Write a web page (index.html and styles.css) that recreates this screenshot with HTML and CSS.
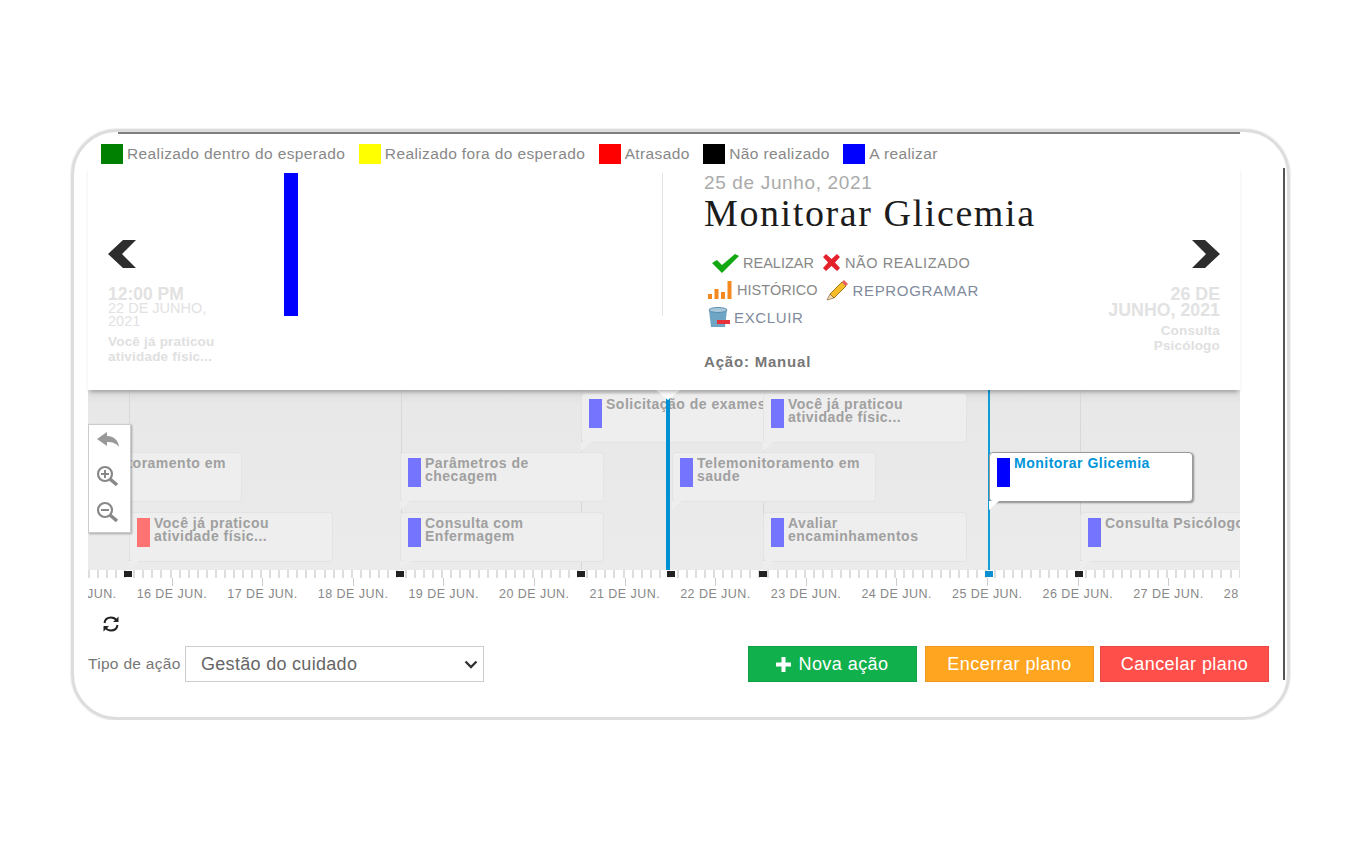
FILE: index.html
```html
<!DOCTYPE html>
<html lang="en">
<head>
    <meta charset="UTF-8">
    <title>Plano de cuidado</title>
    <link rel="stylesheet" href="styles.css">
</head>
<body>
<div class="card">
    <div class="legend">
        <div class="legend-item"><span class="swatch green"></span>Realizado dentro do esperado</div>
        <div class="legend-item"><span class="swatch yellow"></span>Realizado fora do esperado</div>
        <div class="legend-item"><span class="swatch red"></span>Atrasado</div>
        <div class="legend-item"><span class="swatch black"></span>Não realizado</div>
        <div class="legend-item"><span class="swatch blue"></span>A realizar</div>
    </div>

    <div class="slider">
        <div class="slide-prev">
            <div class="nav-col">
                <svg class="chevron" width="28" height="30" viewBox="0 0 28 30"><path d="M0 15 L15 1 H28 L14 15 L28 29 H15 Z" fill="#2d2d2d"/></svg>
                <div class="nav-time">12:00 PM</div>
                <div class="nav-date">22 DE JUNHO, 2021</div>
                <div class="nav-name">Você já praticou atividade físic...</div>
            </div>
            <div class="slide-bar"></div>
        </div>
        <div class="slide-main">
            <div class="slide-date">25 de Junho, 2021</div>
            <h1 class="slide-title">Monitorar Glicemia</h1>
            <div class="actions">
                <div class="action-row first">
                    <svg width="27" height="20" viewBox="0 0 27 20"><path d="M0 10 L5 7 L10 12 L23 1 L27 3 L10 20 Z" fill="#12a812"/></svg>
                    <span class="action-link">REALIZAR</span>
                    <svg width="19" height="17" viewBox="0 0 19 17"><path d="M1 3 L4 0 L9.5 5 L15 0 L18 3 L13 8.500 L18 14 L15 17 L9.500 12 L4 17 L1 14 L6 8.500 Z" fill="#e3222c"/></svg>
                    <span class="action-link wide">NÃO REALIZADO</span>
                </div>
                <div class="action-row">
                    <svg width="24" height="19" viewBox="0 0 24 19"><g fill="#f5891f"><rect x="0" y="13" width="4" height="5"/><rect x="6.500" y="8" width="4" height="10"/><rect x="13" y="11" width="4" height="7"/><rect x="19.500" y="0" width="4" height="18"/></g></svg>
                    <span class="action-link">HISTÓRICO</span>
                    <svg class="pencil" width="24" height="21" viewBox="0 0 24 21"><path d="M6 14 L18 2 L22 6 L10 18 Z" fill="#f6bd2b" stroke="#a8741a"/><path d="M18 2 L20 0 L24 4 L22 6 Z" fill="#e8606a"/><path d="M6 14 L10 18 L3 20 Z" fill="#f4dcb0" stroke="#74502a" stroke-width=".6"/></svg>
                    <span class="action-link blueish">REPROGRAMAR</span>
                </div>
                <div class="action-row last">
                    <svg width="23" height="21" viewBox="0 0 23 21"><path d="M1 3 H19 L17 20 H3 Z" fill="#6fa5c4"/><ellipse cx="10" cy="3" rx="9" ry="2.500" fill="#a8c8dc" stroke="#5b8fae"/><rect x="9" y="13" width="13" height="4" fill="#e8323a"/></svg>
                    <span class="action-link blueish">EXCLUIR</span>
                </div>
            </div>
            <div class="slide-kind">Ação: Manual</div>
        </div>
        <div class="slide-next">
            <svg class="chevron" width="28" height="30" viewBox="0 0 28 30"><path d="M28 15 L13 1 H0 L14 15 L0 29 H13 Z" fill="#2d2d2d"/></svg>
            <div class="nav-time-date">26 DE JUNHO, 2021</div>
            <div class="nav-name">Consulta Psicólogo</div>
        </div>
    </div>

    <div class="timeline">
        <span class="era-line" style="left:41px"></span>
        <span class="era-line" style="left:313px"></span>
        <span class="era-line" style="left:493px"></span>
        <span class="era-line" style="left:675px"></span>
        <span class="era-line" style="left:992px"></span>

        <div class="event row-2" style="left:-50px"><span class="event-bar"></span><span class="event-text">Telemonitoramento em saude</span></div>
        <div class="event row-3" style="left:41px"><span class="event-bar late"></span><span class="event-text">Você já praticou atividade físic...</span></div>
        <div class="event row-2" style="left:312px"><span class="event-bar"></span><span class="event-text">Parâmetros de checagem</span></div>
        <div class="event row-3" style="left:312px"><span class="event-bar"></span><span class="event-text">Consulta com Enfermagem</span></div>
        <div class="event row-1 nowrap" style="left:493px"><span class="event-bar"></span><span class="event-text">Solicitação de exames</span></div>
        <div class="event row-2" style="left:584px"><span class="event-bar"></span><span class="event-text">Telemonitoramento em saude</span></div>
        <div class="event row-1" style="left:675px"><span class="event-bar"></span><span class="event-text">Você já praticou atividade físic...</span></div>
        <div class="event row-3" style="left:675px"><span class="event-bar"></span><span class="event-text">Avaliar encaminhamentos</span></div>
        <div class="event row-3 nowrap" style="left:992px"><span class="event-bar"></span><span class="event-text">Consulta Psicólogo</span></div>

        <span class="current-line" style="left:900px"></span>
        <div class="event row-2 selected" style="left:901px"><span class="event-bar"></span><span class="event-text">Monitorar Glicemia</span></div>

        <span class="today-line"></span>
        <span class="pointer"></span>

        <div class="zoom-tools">
            <svg width="24" height="20" viewBox="0 0 24 20"><path d="M1 8 L11 1 V5 C18 5 22 9 23 16 C20 12 16 11 11 11 V15 Z" fill="#999"/></svg>
            <svg width="24" height="22" viewBox="0 0 24 22"><circle cx="9" cy="9" r="7" fill="none" stroke="#888" stroke-width="2.200"/><path d="M14 14 L21 20" stroke="#888" stroke-width="3.500"/><path d="M5 9 H13 M9 5 V13" stroke="#888" stroke-width="2"/></svg>
            <svg width="24" height="22" viewBox="0 0 24 22"><circle cx="9" cy="9" r="7" fill="none" stroke="#888" stroke-width="2.200"/><path d="M14 14 L21 20" stroke="#888" stroke-width="3.500"/><path d="M5 9 H13" stroke="#888" stroke-width="2"/></svg>
        </div>
    </div>

    <div class="ruler">
        <span class="mark" style="left:36px"></span>
        <span class="mark" style="left:308px"></span>
        <span class="mark" style="left:489px"></span>
        <span class="mark" style="left:579px"></span>
        <span class="mark" style="left:671px"></span>
        <span class="mark current" style="left:897px"></span>
        <span class="mark" style="left:987px"></span>
    </div>
    <div class="scale">
        <span>15 DE JUN.</span>
        <span>16 DE JUN.</span>
        <span>17 DE JUN.</span>
        <span>18 DE JUN.</span>
        <span>19 DE JUN.</span>
        <span>20 DE JUN.</span>
        <span>21 DE JUN.</span>
        <span>22 DE JUN.</span>
        <span>23 DE JUN.</span>
        <span>24 DE JUN.</span>
        <span>25 DE JUN.</span>
        <span>26 DE JUN.</span>
        <span>27 DE JUN.</span>
        <span>28 DE JUN.</span>
    </div>

    <div class="refresh">
        <svg width="18" height="18" viewBox="0 0 18 18" fill="none" stroke="#222" stroke-width="2"><path d="M2.500 8 C3 4.500 5.500 2.500 9 2.500 C11.500 2.500 13.500 3.700 14.700 5.500"/><path d="M15.500 10 C15 13.500 12.500 15.500 9 15.500 C6.500 15.500 4.500 14.300 3.300 12.500"/><path d="M16.500 1.500 V7 H11 Z M1.500 16.500 V11 H7 Z" fill="#222" stroke="none"/></svg>
    </div>

    <div class="form-row">
        <label class="form-label" for="tipo">Tipo de ação</label>
        <div class="select-wrap">
            <select class="form-select" id="tipo">
                <option>Gestão do cuidado</option>
            </select>
            <svg class="select-arrow" width="14" height="9" viewBox="0 0 14 9"><path d="M1.500 1.500 L7 7 L12.500 1.500" fill="none" stroke="#333" stroke-width="2.400"/></svg>
        </div>
        <div class="buttons">
            <button class="btn btn-green"><svg width="15" height="15" viewBox="0 0 15 15"><path d="M5.500 0 H9.500 V5.500 H15 V9.500 H9.500 V15 H5.500 V9.500 H0 V5.500 H5.500 Z" fill="#fff"/></svg>Nova ação</button>
            <button class="btn btn-orange">Encerrar plano</button>
            <button class="btn btn-red">Cancelar plano</button>
        </div>
    </div>
</div>
</body>
</html>
```

FILE: styles.css
```css
body {
    margin: 0;
    padding: 0;
    background-color: #fff;
    font-family: "Liberation Sans", Arial, sans-serif;
}
.card {
    position: relative;
    box-sizing: border-box;
    width: 1219px;
    height: 591px;
    margin: 129px 0 0 71px;
    padding: 12px 0 0 14px;
    border: 3px solid #ddd;
    border-radius: 46px;
    box-shadow: 0 0 2px #ccc;
}
.card::before {
    content: "";
    position: absolute;
    top: 0;
    left: 44px;
    width: 1122px;
    height: 2px;
    background-color: #808080;
}
.card::after {
    content: "";
    position: absolute;
    top: 36px;
    right: 2px;
    width: 2px;
    height: 512px;
    background-color: #555;
}

/* legenda */
.legend {
    display: flex;
    height: 20px;
    padding-left: 13px;
    gap: 13.500px;
}
.legend-item {
    display: flex;
    align-items: center;
    font-size: 15.500px;
    letter-spacing: .38px;
    color: #888;
}
.swatch {
    width: 22px;
    height: 20px;
    margin-right: 4px;
}
.swatch.green { background-color: #008000; }
.swatch.yellow { background-color: #ffff00; }
.swatch.red { background-color: #ff0000; }
.swatch.black { background-color: #000; }
.swatch.blue { background-color: #0000ff; }

/* slide atual */
.slider {
    position: relative;
    z-index: 2;
    display: flex;
    width: 1152px;
    height: 226px;
    background-color: #fff;
    box-shadow: 0 4px 4px -2px rgba(0, 0, 0, 0.28);
}
.slide-prev {
    flex: none;
    display: flex;
    box-sizing: border-box;
    width: 575px;
    height: 143px;
    margin-top: 9px;
    padding-left: 20px;
    border-right: 1px solid #e4e4e4;
}
.nav-col {
    width: 112px;
    padding-top: 66px;
}
.chevron {
    display: block;
}
.nav-time {
    margin-top: 18px;
    font-size: 17.500px;
    line-height: 15px;
    font-weight: bold;
    color: #e2e2e2;
}
.nav-date {
    font-size: 14.500px;
    line-height: 13px;
    color: #e2e2e2;
}
.nav-name {
    margin-top: 6px;
    font-size: 13.500px;
    line-height: 15px;
    font-weight: bold;
    letter-spacing: .2px;
    color: #e0e0e0;
}
.slide-bar {
    width: 14px;
    height: 143px;
    margin-left: 64px;
    background-color: #0000ff;
}
.slide-main {
    flex: none;
    box-sizing: border-box;
    width: 442px;
    padding: 9px 0 0 41px;
}
.slide-date {
    font-size: 19px;
    line-height: 20px;
    letter-spacing: .65px;
    color: #aaa;
}
.slide-title {
    margin: 1px 0 0;
    font-family: "Liberation Serif", Georgia, serif;
    font-size: 38px;
    line-height: 38px;
    font-weight: normal;
    letter-spacing: 1.600px;
    color: #1c1c1c;
}
.actions {
    margin-top: 17px;
}
.action-row {
    display: flex;
    align-items: center;
    height: 27.500px;
    padding-left: 4px;
    gap: 5px;
    font-size: 14.500px;
    color: #888;
}
.action-row.first {
    padding-left: 8px;
    gap: 4px;
}
.action-row.last {
    gap: 3px;
}
.action-row svg + span + svg {
    margin-left: 4px;
}
.action-row svg.pencil {
    margin-left: 1px;
}
.action-link.wide {
    letter-spacing: .6px;
}
.action-link.blueish {
    font-size: 15px;
    letter-spacing: .65px;
    color: #7f8a9c;
}
.slide-kind {
    margin-top: 21px;
    font-size: 15px;
    font-weight: bold;
    letter-spacing: .8px;
    color: #777;
}
.slide-next {
    flex: 1;
    display: flex;
    flex-direction: column;
    align-items: flex-end;
    padding: 75px 20px 0 0;
    text-align: right;
}
.nav-time-date {
    width: 115px;
    margin-top: 17px;
    font-size: 17.800px;
    line-height: 16px;
    font-weight: bold;
    color: #e2e2e2;
}
.slide-next .nav-name {
    width: 75px;
    margin-top: 5px;
}

/* linha do tempo */
.timeline {
    position: relative;
    width: 1152px;
    height: 180px;
    overflow: hidden;
    background: linear-gradient(#dcdcdc 0, #e8e8e8 14px, #ebebeb 100%);
}
.era-line {
    position: absolute;
    top: 0;
    bottom: 0;
    width: 1px;
    background-color: #d8d8d8;
}
.event {
    position: absolute;
    box-sizing: border-box;
    display: flex;
    width: 204px;
    height: 50px;
    padding: 5px 7px;
    gap: 4px;
    background-color: #eee;
    border: 1px solid #e3e3e3;
    border-radius: 4px;
}
.event::after {
    content: "";
    position: absolute;
    left: -1px;
    bottom: -9px;
    width: 10px;
    height: 9px;
    background-color: #eee;
    clip-path: polygon(0 0, 100% 0, 0 100%);
}
.row-1 { top: 3px; }
.row-2 { top: 62px; }
.row-3 { top: 122px; }
.nowrap {
    width: auto;
    white-space: nowrap;
}
.event-bar {
    flex: none;
    width: 13px;
    height: 29px;
    background-color: #7474ff;
}
.event-bar.late {
    background-color: #ff7373;
}
.event-text {
    margin-top: -1px;
    font-size: 14px;
    line-height: 13px;
    font-weight: bold;
    letter-spacing: .5px;
    color: #a0a0a0;
}
.event.selected {
    background-color: #fff;
    border-color: #999;
    box-shadow: 1px 1px 2px rgba(0, 0, 0, 0.4);
}
.event.selected::after {
    background-color: #fff;
}
.event.selected .event-bar {
    background-color: #0000ff;
}
.event.selected .event-text {
    color: #0095d9;
}
.current-line {
    position: absolute;
    top: 0;
    bottom: 0;
    width: 2px;
    background-color: #0f9dd8;
}
.today-line {
    position: absolute;
    top: 8px;
    bottom: 0;
    left: 578px;
    width: 4px;
    background-color: #0091d5;
}
.pointer {
    position: absolute;
    top: 0;
    left: 568px;
    width: 24px;
    height: 10px;
    background-color: #fff;
    clip-path: polygon(0 0, 100% 0, 50% 100%);
}
.zoom-tools {
    position: absolute;
    top: 34px;
    left: 0;
    box-sizing: border-box;
    display: flex;
    flex-direction: column;
    align-items: center;
    gap: 14px;
    width: 43px;
    height: 109px;
    padding: 6px 3px 0 0;
    background-color: #fff;
    border: 1px solid #ccc;
    box-shadow: 1px 1px 2px rgba(0, 0, 0, 0.3);
}

/* regua */
.ruler {
    position: relative;
    width: 1152px;
    height: 8px;
    background: repeating-linear-gradient(90deg, #ddd 0, #ddd 2px, #fff 2px, #fff 9.060px);
}
.mark {
    position: absolute;
    top: 1px;
    width: 8px;
    height: 6px;
    background-color: #222;
}
.mark.current {
    background-color: #0a8fd0;
}
.scale {
    display: flex;
    width: 1152px;
    height: 29px;
    overflow: hidden;
}
.scale span {
    position: relative;
    flex: none;
    width: 90.600px;
    padding-top: 9px;
    font-size: 12.500px;
    line-height: 14px;
    letter-spacing: .45px;
    text-align: center;
    white-space: nowrap;
    color: #888;
}
.scale span:first-child {
    margin-left: -52px;
}
.scale span::before {
    content: "";
    position: absolute;
    top: 0;
    left: 45px;
    width: 1px;
    height: 8px;
    background-color: #ccc;
}
.refresh {
    height: 18px;
    margin: 8px 0 0 14px;
}
.refresh svg {
    display: block;
}

/* formulario */
.form-row {
    display: flex;
    align-items: center;
    width: 1181px;
    margin-top: 13px;
}
.form-label {
    width: 97px;
    font-size: 15.500px;
    letter-spacing: .3px;
    color: #777;
}
.select-wrap {
    position: relative;
    display: flex;
}
.select-arrow {
    position: absolute;
    top: 14px;
    right: 6px;
    pointer-events: none;
}
.form-select {
    appearance: none;
    width: 299px;
    height: 36px;
    padding-left: 15px;
    font-family: "Liberation Sans", Arial, sans-serif;
    font-size: 18px;
    letter-spacing: .3px;
    color: #666;
    background-color: #fff;
    border: 1px solid #ccc;
    border-radius: 0;
}
.buttons {
    display: flex;
    gap: 7px;
    margin-left: auto;
}
.btn {
    display: flex;
    align-items: center;
    justify-content: center;
    gap: 7px;
    width: 169px;
    height: 36px;
    padding: 0;
    font-family: "Liberation Sans", Arial, sans-serif;
    font-size: 18px;
    letter-spacing: .45px;
    color: #fff;
    border: 1px solid rgba(0, 0, 0, 0.08);
}
.btn-green { background-color: #10b04c; margin-right: 1px; }
.btn-orange { background-color: #ffa51f; }
.btn-red { background-color: #ff4f4b; margin-left: -1px; }
```
